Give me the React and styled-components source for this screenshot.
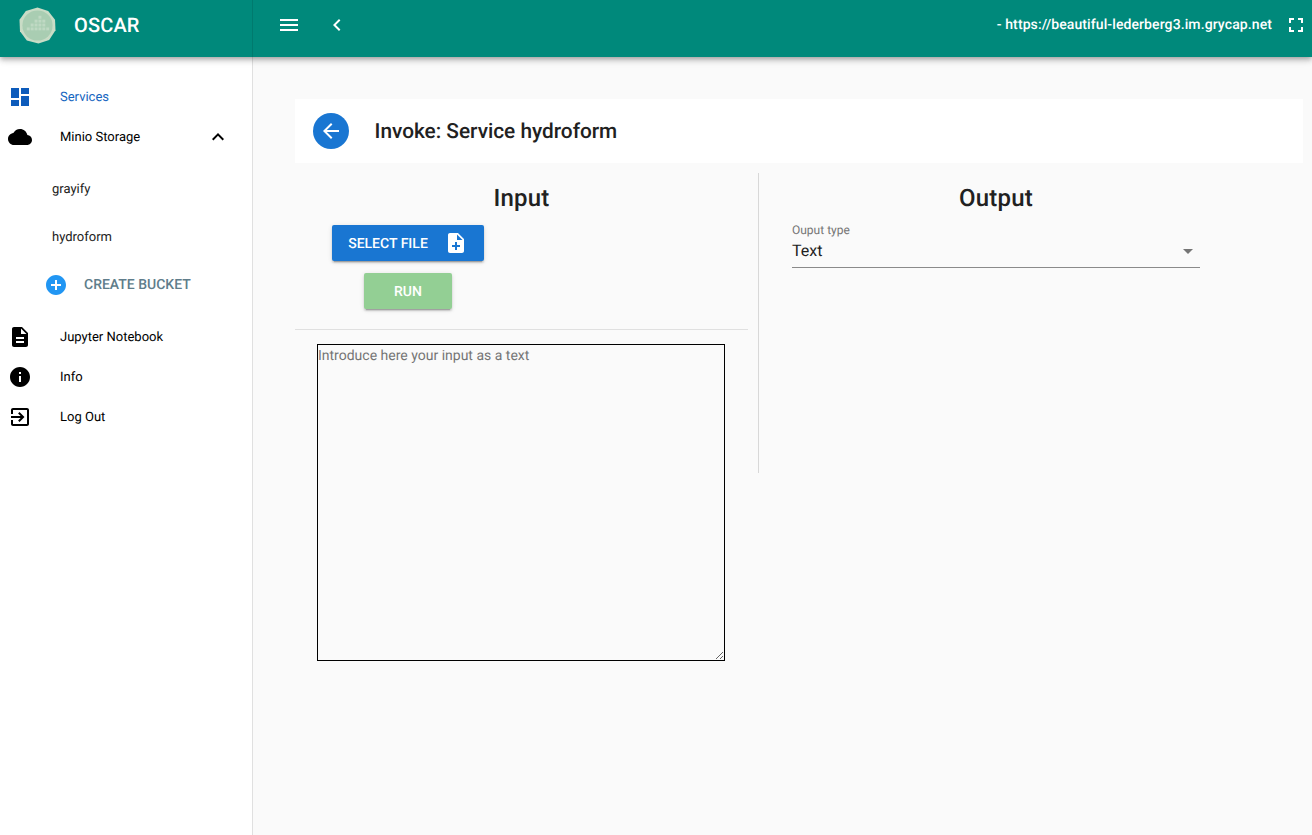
import styled, { createGlobalStyle } from "styled-components";

const paths = {
  dashboard: "M3 13h8V3H3v10zm0 8h8v-6H3v6zm10 0h8V11h-8v10zm0-18v6h8V3h-8z",
  cloud:
    "M19.35 10.04C18.67 6.59 15.64 4 12 4 9.11 4 6.6 5.64 5.35 8.04 2.34 8.36 0 10.91 0 14c0 3.31 2.69 6 6 6h13c2.76 0 5-2.24 5-5 0-2.64-2.05-4.78-4.65-4.96z",
  expandLess: "M12 8l-6 6 1.41 1.41L12 10.83l4.59 4.58L18 14z",
  description:
    "M14 2H6c-1.1 0-1.99.9-1.99 2L4 20c0 1.1.89 2 1.99 2H18c1.1 0 2-.9 2-2V8l-6-6zm2 16H8v-2h8v2zm0-4H8v-2h8v2zm-3-5V3.5L18.5 9H13z",
  info: "M12 2C6.48 2 2 6.48 2 12s4.48 10 10 10 10-4.48 10-10S17.52 2 12 2zm1 15h-2v-6h2v6zm0-8h-2V7h2v2z",
  exit: "M10.09 15.59L11.5 17l5-5-5-5-1.41 1.41L12.67 11H3v2h9.67l-2.58 2.59zM19 3H5c-1.11 0-2 .9-2 2v4h2V5h14v14H5v-4H3v4c0 1.1.89 2 2 2h14c1.1 0 2-.9 2-2V5c0-1.1-.9-2-2-2z",
  menu: "M3 18h18v-2H3v2zm0-5h18v-2H3v2zm0-7v2h18V6H3z",
  chevronLeft: "M15.41 7.41L14 6l-6 6 6 6 1.41-1.41L10.83 12z",
  fullscreen: "M7 14H5v5h5v-2H7v-3zm-2-4h2V7h3V5H5v5zm12 7h-3v2h5v-5h-2v3zM14 5v2h3v3h2V5h-5z",
  arrowBack: "M20 11H7.83l5.59-5.59L12 4l-8 8 8 8 1.41-1.41L7.83 13H20v-2z",
  noteAdd:
    "M14 2H6c-1.1 0-1.99.9-1.99 2L4 20c0 1.1.89 2 1.99 2H18c1.1 0 2-.9 2-2V8l-6-6zm2 14h-3v3h-2v-3H8v-2h3v-3h2v3h3v2zm-3-7V3.5L18.5 9H13z",
  addCircle:
    "M12 2C6.48 2 2 6.48 2 12s4.48 10 10 10 10-4.48 10-10S17.52 2 12 2zm5 11h-4v4h-2v-4H7v-2h4V7h2v4h4v2z",
  dropDown: "M7 10l5 5 5-5z",
};

const Icon = ({ name, size = 24, color = "currentColor" }) => (
  <svg width={size} height={size} viewBox="0 0 24 24" fill={color} style={{ flexShrink: 0 }}>
    <path d={paths[name]} />
  </svg>
);

const Logo = () => (
  <svg width="37" height="37" viewBox="0 0 38 38">
    <polygon
      points="19,0.5 30,4 37,13 37.5,24 31,34 20,37.5 8,34.5 1,25 0.5,13 7,4"
      fill="#c9dcc6"
    />
    <circle cx="19" cy="19" r="15.5" fill="#a9cdb2" />
    <g fill="#bfd9c3">
      <rect x="20" y="9" width="3" height="3" />
      <rect x="16" y="13" width="3" height="3" />
      <rect x="20" y="13" width="3" height="3" />
      <rect x="24" y="13" width="3" height="3" />
      <rect x="12" y="17" width="3" height="3" />
      <rect x="16" y="17" width="3" height="3" />
      <rect x="20" y="17" width="3" height="3" />
      <rect x="24" y="17" width="3" height="3" />
      <rect x="8" y="21" width="3" height="3" />
      <rect x="12" y="21" width="3" height="3" />
      <rect x="16" y="21" width="3" height="3" />
      <rect x="20" y="21" width="3" height="3" />
      <rect x="24" y="21" width="3" height="3" />
      <rect x="28" y="21" width="3" height="3" />
    </g>
  </svg>
);

const GlobalStyle = createGlobalStyle`
  html, body {
    margin: 0;
    padding: 0;
    height: 100%;
    overflow: hidden;
  }
  body {
    font-family: Roboto, "Liberation Sans", sans-serif;
    background: #fafafa;
    text-rendering: geometricPrecision;
  }
  * {
    box-sizing: border-box;
  }
`;

const Page = styled.div`
  width: 1312px;
  height: 835px;
  display: flex;
  flex-direction: column;
  overflow: hidden;
`;

const TopBar = styled.header`
  height: 57px;
  flex-shrink: 0;
  display: flex;
  background: #00897b;
  color: #fff;
  position: relative;
  z-index: 2;
  box-shadow: 0 2px 4px -1px rgba(0, 0, 0, 0.2), 0 4px 5px 0 rgba(0, 0, 0, 0.14),
    0 1px 10px 0 rgba(0, 0, 0, 0.12);
`;

const Brand = styled.div`
  width: 253px;
  display: flex;
  align-items: center;
  padding: 0 0 7px 19px;
  gap: 18px;
  border-right: 1px solid #007a6e;
  font-size: 20px;
  font-weight: 500;
  letter-spacing: 0.15px;
`;

const BarActions = styled.div`
  flex: 1;
  display: flex;
  align-items: center;
  padding: 0 0 7px 24px;
  gap: 24px;
`;

const BarRight = styled.div`
  margin-left: auto;
  margin-right: 4px;
  display: flex;
  align-items: center;
  gap: 12px;
`;

const ServerUrl = styled.span`
  font-size: 14px;
  font-weight: 500;
  letter-spacing: 0.1px;
  white-space: nowrap;
`;

const Body = styled.div`
  flex: 1;
  display: flex;
  min-height: 0;
`;

const Sidebar = styled.nav`
  width: 253px;
  flex-shrink: 0;
  background: #fff;
  border-right: 1px solid #e0e0e0;
  padding-top: 19px;
`;

const NavRow = styled.div`
  height: 40px;
  display: flex;
  align-items: center;
  padding: 2px 0 0 8px;
  font-size: 13px;
  color: ${(p) => (p.$active ? "#1565c0" : "#000")};
`;

const NavIcon = styled.div`
  width: 52px;
  display: flex;
  color: ${(p) => (p.$active ? "#0d5bbb" : "#000")};
`;

const NavChevron = styled.div`
  display: flex;
  margin-left: auto;
  margin-right: 22px;
`;

const BucketList = styled.div`
  padding-top: 8px;
  padding-bottom: 8px;
`;

const BucketRow = styled.div`
  height: 48px;
  display: flex;
  align-items: center;
  padding: 2px 0 0 52px;
  font-size: 13px;
  color: #212121;
`;

const CreateRow = styled.div`
  height: 48px;
  display: flex;
  align-items: center;
  padding: 2px 0 0 44px;
  gap: 16px;
  font-size: 14px;
  font-weight: 500;
  color: #607d8b;
`;

const Main = styled.main`
  flex: 1;
  padding: 42px 9px 0 42px;
  background: #fafafa;
`;

const TitleCard = styled.div`
  height: 64px;
  display: flex;
  align-items: center;
  padding-left: 18px;
  gap: 25.5px;
  background: #fff;
  font-size: 20.8px;
  font-weight: 500;
  color: #212121;
`;

const TitleText = styled.span`
  margin-top: 2px;
`;

const BackBtn = styled.div`
  width: 36px;
  height: 36px;
  border-radius: 50%;
  display: flex;
  align-items: center;
  justify-content: center;
  background: #1976d2;
  color: #fff;
`;

const Columns = styled.div`
  display: flex;
  align-items: flex-start;
  margin-top: 10px;
`;

const InputCol = styled.section`
  width: 453px;
  flex-shrink: 0;
  display: flex;
  flex-direction: column;
`;

const Heading = styled.h2`
  margin: 0;
  height: 52px;
  line-height: 50px;
  font-size: 24px;
  font-weight: 500;
  letter-spacing: 0.2px;
  text-align: center;
  color: #212121;
`;

const Buttons = styled.div`
  width: 226px;
  display: flex;
  flex-direction: column;
  align-items: center;
  gap: 12px;
`;

const ActionBtn = styled.button`
  all: unset;
  height: 36px;
  display: flex;
  align-items: center;
  justify-content: center;
  gap: 16px;
  width: ${(p) => p.$width}px;
  border-radius: 2px;
  background: ${(p) => p.$bg};
  color: #fff;
  font-size: 14px;
  font-weight: 500;
  box-shadow: 0 3px 1px -2px rgba(0, 0, 0, 0.2), 0 2px 2px 0 rgba(0, 0, 0, 0.14),
    0 1px 5px 0 rgba(0, 0, 0, 0.12);
`;

const BtnLabel = styled.span`
  margin-top: 2px;
`;

const Rule = styled.hr`
  width: 100%;
  margin: 20px 0 14px;
  border: 0;
  border-top: 1px solid #e0e0e0;
`;

const TextBox = styled.textarea`
  display: block;
  width: 408px;
  height: 317px;
  margin-left: 22px;
  padding: 3px 0 0 0;
  border: 1px solid #000;
  border-radius: 0;
  background: transparent;
  outline: none;
  font-family: Roboto, "Liberation Sans", sans-serif;
  font-size: 14px;
  text-rendering: geometricPrecision;

  &::placeholder {
    color: #757575;
    opacity: 1;
  }
`;

const Divider = styled.div`
  width: 1px;
  height: 300px;
  flex-shrink: 0;
  margin-left: 10px;
  background: #d8d8d8;
`;

const OutputCol = styled.section`
  width: 474px;
  flex-shrink: 0;
`;

const SelectWrap = styled.div`
  width: 408px;
  margin-left: 33px;
`;

const SelectLabel = styled.div`
  height: 10px;
  line-height: 10px;
  font-size: 12px;
  color: #757575;
`;

const SelectField = styled.div`
  height: 33px;
  display: flex;
  align-items: center;
  justify-content: space-between;
  padding-bottom: 2px;
  border-bottom: 1px solid #8a8a8a;
  font-size: 16px;
  color: #212121;
`;

const DropIcon = styled.div`
  display: flex;
  margin-top: 2px;
`;

const mainNav = [
  { icon: "description", label: "Jupyter Notebook" },
  { icon: "info", label: "Info" },
  { icon: "exit", label: "Log Out" },
];

const App = () => {
  const buckets = ["grayify", "hydroform"];

  return (
    <Page>
      <GlobalStyle />
      <TopBar>
        <Brand>
          <Logo />
          OSCAR
        </Brand>
        <BarActions>
          <Icon name="menu" />
          <Icon name="chevronLeft" />
          <BarRight>
            <ServerUrl>- https://beautiful-lederberg3.im.grycap.net</ServerUrl>
            <Icon name="fullscreen" />
          </BarRight>
        </BarActions>
      </TopBar>
      <Body>
        <Sidebar>
          <NavRow $active>
            <NavIcon $active>
              <Icon name="dashboard" />
            </NavIcon>
            Services
          </NavRow>
          <NavRow>
            <NavIcon>
              <Icon name="cloud" />
            </NavIcon>
            Minio Storage
            <NavChevron>
              <Icon name="expandLess" />
            </NavChevron>
          </NavRow>
          <BucketList>
            {buckets.map((b) => (
              <BucketRow key={b}>{b}</BucketRow>
            ))}
            <CreateRow>
              <Icon name="addCircle" color="#2196f3" />
              CREATE BUCKET
            </CreateRow>
          </BucketList>
          {mainNav.map((item) => (
            <NavRow key={item.label}>
              <NavIcon>
                <Icon name={item.icon} />
              </NavIcon>
              {item.label}
            </NavRow>
          ))}
        </Sidebar>
        <Main>
          <TitleCard>
            <BackBtn>
              <Icon name="arrowBack" />
            </BackBtn>
            <TitleText>Invoke: Service hydroform</TitleText>
          </TitleCard>
          <Columns>
            <InputCol>
              <Heading>Input</Heading>
              <Buttons>
                <ActionBtn $width={152} $bg="#1976d2">
                  <BtnLabel>SELECT FILE</BtnLabel>
                  <Icon name="noteAdd" />
                </ActionBtn>
                <ActionBtn $width={88} $bg="#93cf94">
                  <BtnLabel>RUN</BtnLabel>
                </ActionBtn>
              </Buttons>
              <Rule />
              <TextBox placeholder="Introduce here your input as a text" />
            </InputCol>
            <Divider />
            <OutputCol>
              <Heading>Output</Heading>
              <SelectWrap>
                <SelectLabel>Ouput type</SelectLabel>
                <SelectField>
                  Text
                  <DropIcon>
                    <Icon name="dropDown" color="#757575" />
                  </DropIcon>
                </SelectField>
              </SelectWrap>
            </OutputCol>
          </Columns>
        </Main>
      </Body>
    </Page>
  );
};

export default App;
